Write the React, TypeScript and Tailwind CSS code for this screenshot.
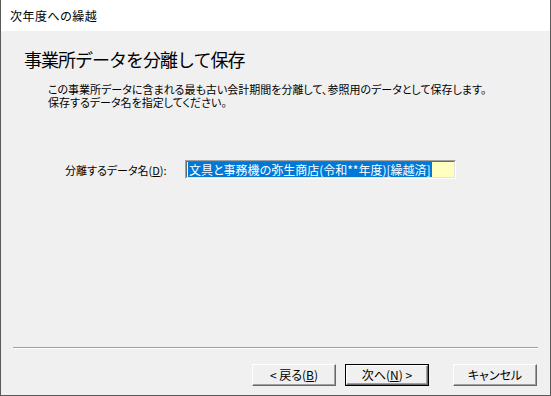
import React from "react";

const jp = "font-['Noto_Sans_CJK_JP',sans-serif] [font-feature-settings:'palt']";

interface DlgButtonProps {
  label: React.ReactNode;
  isDefault?: boolean;
}

const DlgButton: React.FC<DlgButtonProps> = ({ label, isDefault }) => {
  return (
    <div
      className={
        isDefault
          ? "w-[84px] h-[22px] border border-[#000]"
          : "w-[84px] h-[22px]"
      }
    >
      {/* classic raised 3D edge */}
      <div className="w-full h-full flex items-center justify-center bg-[#f0f0f0] border border-t-white border-l-white border-r-[#696969] border-b-[#696969] shadow-[inset_-1px_-1px_0_#a0a0a0] text-[12px] leading-[12px] text-black">
        {label}
      </div>
    </div>
  );
};

export default function App() {
  return (
    <div className={`w-[551px] h-[396px] flex flex-col bg-[#f0f0f0] border-l border-r border-b border-[#5a5a5a] ${jp}`}>
      {/* Title strip */}
      <div className="h-[31px] bg-white flex items-center pl-[9px] text-[12px] tracking-[0.5px] text-black shrink-0">
        次年度への繰越
      </div>

      {/* Page body */}
      <div className="flex-1 flex flex-col">
        <div className="pt-[16px] pl-[23px] text-[18px] leading-[24px] tracking-[-1px] text-black [font-feature-settings:normal]">
          事業所データを分離して保存
        </div>
        <div className="mt-[12px] pl-[47px] text-[11px] leading-[13px] text-black">
          <div>この事業所データに含まれる最も古い会計期間を分離して、参照用のデータとして保存します。</div>
          <div>保存するデータ名を指定してください。</div>
        </div>

        {/* Name field */}
        <div className="mt-[51px] flex items-center h-[19px]">
          <div className="pl-[64px] w-[184px] text-[11px] leading-[12px] text-black">
            分離するデータ名(<span className="underline underline-offset-1">D</span>):
          </div>
          <div className="w-[271px] h-[19px] border border-t-[#a0a0a0] border-l-[#a0a0a0] border-r-white border-b-white">
            <div className="w-full h-full bg-[#ffffc0] border border-t-[#696969] border-l-[#696969] border-r-[#e3e3e3] border-b-[#e3e3e3] flex items-center pl-[1px]">
              <span className="bg-[#0078d7] text-white text-[12px] leading-[15px] px-[1px]">
                文具と事務機の弥生商店(令和**年度)[繰越済]
              </span>
            </div>
          </div>
        </div>

        <div className="flex-1" />

        {/* Separator */}
        <div className="ml-[12px] mr-[12px] border-t border-t-[#a0a0a0] border-b border-b-white" />

        {/* Buttons */}
        <div className="mt-[15px] mb-[9px] pr-[13px] flex justify-end items-center">
          <DlgButton
            label={
              <span>
                &lt; 戻る(<span className="underline underline-offset-1">B</span>)
              </span>
            }
          />
          <div className="w-[9px]" />
          <DlgButton
            isDefault
            label={
              <span>
                次へ(<span className="underline underline-offset-1">N</span>) &gt;
              </span>
            }
          />
          <div className="w-[24px]" />
          <DlgButton label="キャンセル" />
        </div>
      </div>
    </div>
  );
}
